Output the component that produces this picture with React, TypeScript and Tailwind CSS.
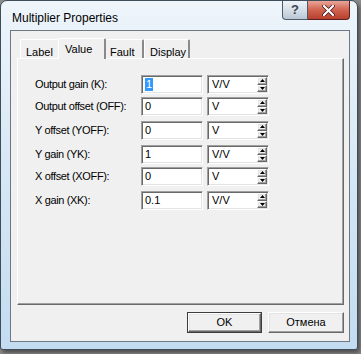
import React, { FC } from "react";

const rows = [
  { label: "Output gain (K):", value: "1", unit: "V/V", mt: "mt-[16px]", selected: true },
  { label: "Output offset (OFF):", value: "0", unit: "V", mt: "mt-[3px]" },
  { label: "Y offset (YOFF):", value: "0", unit: "V", mt: "mt-[5px]" },
  { label: "Y gain (YK):", value: "1", unit: "V/V", mt: "mt-[5px]" },
  { label: "X offset (XOFF):", value: "0", unit: "V", mt: "mt-[3px]" },
  { label: "X gain (XK):", value: "0.1", unit: "V/V", mt: "mt-[5px]" },
];

const tabs = [
  { name: "Label", w: "w-[40px]" },
  { name: "Value", w: "w-[48px]" },
  { name: "Fault", w: "w-[40px]" },
  { name: "Display", w: "w-[46px]" },
];

const sunken =
  "border border-t-[#a0a0a0] border-l-[#a0a0a0] border-b-white border-r-white shadow-[inset_1px_1px_0_#696969,inset_-1px_-1px_0_#e3e3e3] bg-white";

const raised =
  "border border-t-white border-l-white border-b-[#696969] border-r-[#696969] shadow-[inset_-1px_-1px_0_#a0a0a0,inset_1px_1px_0_#e3e3e3] bg-[#f0f0f0]";

const Spinner: FC = () => (
  <div className="flex flex-col w-[10px] h-[15px] mr-[1px]">
    <div className={`${raised} flex-1 flex items-center justify-center`}>
      <svg width="5" height="3" viewBox="0 0 5 3">
        <path d="M2.5 0 L5 3 L0 3 Z" fill="#000" />
      </svg>
    </div>
    <div className={`${raised} flex-1 flex items-center justify-center`}>
      <svg width="5" height="3" viewBox="0 0 5 3">
        <path d="M0 0 L5 0 L2.5 3 Z" fill="#000" />
      </svg>
    </div>
  </div>
);

const Row: FC<(typeof rows)[number]> = ({ label, value, unit, mt, selected }) => (
  <div className={`flex items-center ${mt}`}>
    <div className="w-[123px] pl-[17px] text-[11px] tracking-[-0.35px] text-black whitespace-nowrap">{label}</div>
    <div className={`${sunken} w-[62px] h-[19px] flex items-center pl-[3px] text-[11px] leading-none`}>
      {selected ? <span className="bg-[#3399ff] text-white px-[1px] py-[1px]">{value}</span> : value}
    </div>
    <div className={`${sunken} ml-[4px] w-[62px] h-[19px] flex items-center justify-between pl-[4px] text-[11px]`}>
      <span>{unit}</span>
      <Spinner />
    </div>
  </div>
);

const App: FC = () => {
  return (
    <div className="w-[361px] h-[354px] bg-[#8c8c8c] font-['Liberation_Sans',Arial,sans-serif]">
      <div className="w-[358px] h-[350px] rounded-t-[7px] rounded-b-[3px] border border-[#3f4d5b] bg-gradient-to-b from-[#eef5fb] via-[#d6e7f5] to-[#c3dcf1] shadow-[2px_3px_4px_rgba(0,0,0,0.45)] flex flex-col">
        <div className="h-[29px] flex items-start justify-between pl-[11px] pr-[7px]">
          <div className="pt-[8px] text-[12px] text-black font-['Liberation_Sans',sans-serif]">Multiplier Properties</div>
          <div className="flex">
            <div className="w-[26px] h-[19px] rounded-bl-[4px] border border-[#4b5b6b] border-t-0 bg-gradient-to-b from-[#eef3f8] via-[#d6dfe8] to-[#b9c6d3] flex items-center justify-center text-[13px] font-bold text-[#3c4650]">
              ?
            </div>
            <div className="w-[42px] h-[19px] rounded-br-[4px] border border-[#5a2020] border-t-0 border-l-0 bg-gradient-to-b from-[#e8a598] via-[#d0624f] to-[#b8402e] flex items-center justify-center">
              <svg width="13" height="11" viewBox="0 0 13 11">
                <path d="M2 1 L11 10 M11 1 L2 10" stroke="#3a1410" strokeWidth="3.6" strokeLinecap="round" />
                <path d="M2 1 L11 10 M11 1 L2 10" stroke="#fff" strokeWidth="2.2" strokeLinecap="round" />
              </svg>
            </div>
          </div>
        </div>
        <div className="ml-[9px] mr-[7px] h-[312px] border border-[#6e7782] bg-[#f0f0f0] flex flex-col">
          <div className="flex pl-[9px] pt-[7px] h-[27px] items-end">
            {tabs.map((t) => {
              const active = t.name === "Value";
              return (
                <div
                  key={t.name}
                  className={`${t.w} border-t border-l border-white border-r-2 border-r-[#8a8a8a] rounded-t-[2px] text-[11px] flex items-start ${
                    active
                      ? "h-[21px] pl-[6px] pt-[2px] bg-[#f0f0f0] -mb-px relative z-10 -mx-[2px]"
                      : "h-[19px] pl-[5px] pt-[4px] bg-[#f0f0f0]"
                  }`}
                >
                  {t.name}
                </div>
              );
            })}
          </div>
          <div className="ml-[6px] mr-[5px] h-[247px] border-t border-l border-white border-r border-b border-r-[#696969] border-b-[#696969] shadow-[inset_-1px_-1px_0_#a0a0a0] flex flex-col">
            {rows.map((r) => (
              <Row key={r.label} {...r} />
            ))}
          </div>
          <div className="flex justify-end gap-[6px] mt-[7px] mr-[5px]">
            <div className="w-[75px] h-[21px] border border-[#3c3c3c] flex">
              <div className={`${raised} flex-1 flex items-center justify-center text-[11px]`}>OK</div>
            </div>
            <div className={`${raised} w-[76px] h-[21px] flex items-center justify-center text-[11px]`}>Отмена</div>
          </div>
        </div>
      </div>
    </div>
  );
};

export default App;
